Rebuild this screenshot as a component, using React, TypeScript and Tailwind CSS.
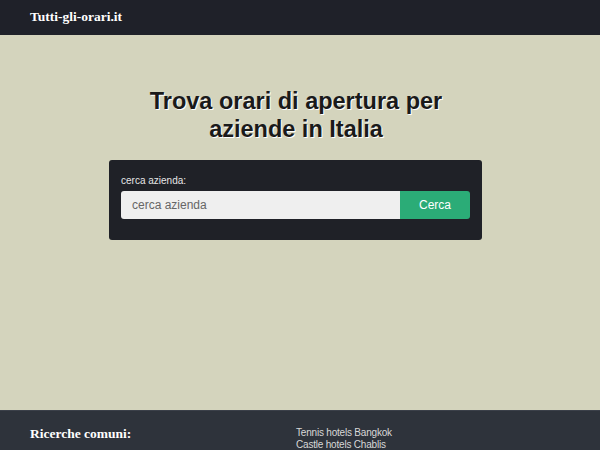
const links = ["Tennis hotels Bangkok", "Castle hotels Chablis"];

export default function App() {
  return (
    <div className="min-h-screen bg-[#d4d4bd]" style={{ fontFamily: '"Liberation Sans", Arial, sans-serif' }}>
      <header className="h-[35px] bg-[#1f2129] flex items-center px-[30px]">
        <span className="text-white font-bold text-[13.5px]" style={{ fontFamily: '"Liberation Serif", "Times New Roman", serif' }}>
          Tutti-gli-orari.it
        </span>
      </header>

      <main className="h-[375px] flex flex-col items-center pt-[52px] pr-[15px]">
        <h1
          className="text-center text-[23.5px] leading-[28px] font-bold text-[#1a1a1a] w-[330px] ml-[7px]"
          style={{ textShadow: "1px 1px 0 #ffffff" }}
        >
          Trova orari di apertura per aziende in Italia
        </h1>
        <div className="mt-[17px] w-[373px] ml-[6px] bg-[#1f2127] rounded-[3px] px-[12px] pt-[13px] pb-[21px]">
          <label className="block text-[10px] text-[#e6e6e6] mb-[3px]">cerca azienda:</label>
          <div className="flex h-[28px]">
            <input
              type="text"
              placeholder="cerca azienda"
              className="flex-1 min-w-0 bg-[#efefef] rounded-l-[3px] px-[11px] text-[12px] text-[#333] placeholder:text-[#666] outline-none"
            />
            <button className="w-[70px] bg-[#2bac77] text-white text-[12px] rounded-r-[3px]">Cerca</button>
          </div>
        </div>
      </main>

      <footer className="bg-[#2e333b] border-t border-[#3b4049] flex px-[30px] pt-[16px] pb-[16px]">
        <div className="w-[266px]">
          <h2 className="text-white font-bold text-[13.5px] leading-[14px]" style={{ fontFamily: '"Liberation Serif", "Times New Roman", serif' }}>
            Ricerche comuni:
          </h2>
        </div>
        <ul className="text-[10px] tracking-[-0.2px] leading-[12px] text-[#d8d8d8]">
          {links.map((l) => (
            <li key={l}>{l}</li>
          ))}
        </ul>
      </footer>
    </div>
  );
}
